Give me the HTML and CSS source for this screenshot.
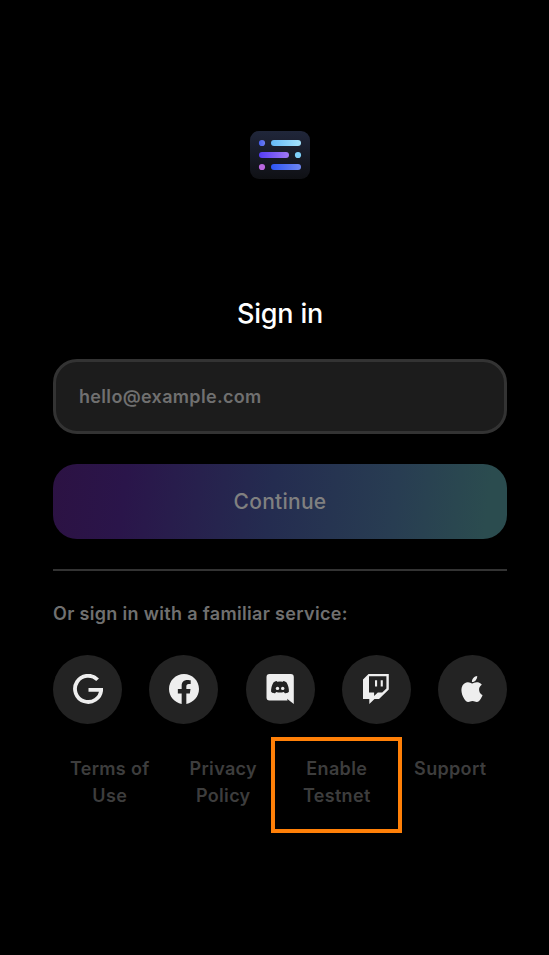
FILE: index.html
```html
<!DOCTYPE html>
<html lang="en">
<head>
<meta charset="utf-8">
<title>Sign in</title>
<link rel="stylesheet" href="styles.css">
</head>
<body>
<main class="page">
  <svg class="logo" viewBox="0 0 60 48" aria-hidden="true">
    <defs>
      <linearGradient id="bg" x1="0" y1="0" x2="0" y2="1"><stop stop-color="#20263a"/><stop offset="1" stop-color="#0f1014"/></linearGradient>
      <linearGradient id="sky"><stop stop-color="#65b9f8"/><stop offset="1" stop-color="#a4e3fc"/></linearGradient>
      <linearGradient id="violet"><stop stop-color="#553df5"/><stop offset="1" stop-color="#a078f5"/></linearGradient>
      <linearGradient id="blue"><stop stop-color="#2d55f5"/><stop offset="1" stop-color="#6e86f0"/></linearGradient>
      <linearGradient id="indigo"><stop stop-color="#4560f0"/><stop offset="1" stop-color="#6d7cf0"/></linearGradient>
    </defs>
    <rect width="60" height="48" rx="9" fill="url(#bg)"/>
    <circle cx="12" cy="12" r="3.1" fill="url(#indigo)"/>
    <rect x="21" y="9" width="30" height="6" rx="3" fill="url(#sky)"/>
    <rect x="9" y="21" width="30" height="6" rx="3" fill="url(#violet)"/>
    <circle cx="48" cy="24" r="3.1" fill="#7ed0f9"/>
    <circle cx="12" cy="36" r="3.1" fill="#b967df"/>
    <rect x="21" y="33" width="30" height="6" rx="3" fill="url(#blue)"/>
  </svg>
  <h1 class="title">Sign in</h1>
  <form class="form">
    <input class="email" type="email" placeholder="hello@example.com" aria-label="Email">
    <button class="continue" type="button">Continue</button>
  </form>
  <hr class="divider">
  <p class="hint">Or sign in with a familiar service:</p>
  <div class="services">
    <button class="service" aria-label="Google">
      <svg viewBox="0 0 30 30"><path d="M24.600 5.800A13.100 13.100 0 1 0 28.200 15.800H15.500" fill="none" stroke="#eee" stroke-width="3.800"/></svg>
    </button>
    <button class="service" aria-label="Facebook">
      <svg viewBox="0 0 24 24"><path fill="#eee" d="M24 12.073c0-6.627-5.373-12-12-12s-12 5.373-12 12c0 5.990 4.388 10.954 10.125 11.854v-8.385H7.078v-3.470h3.047V9.430c0-3.007 1.792-4.669 4.533-4.669 1.312 0 2.686.235 2.686.235v2.953H15.830c-1.491 0-1.956.925-1.956 1.874v2.250h3.328l-.532 3.470h-2.796v8.385C19.612 23.027 24 18.062 24 12.073z"/></svg>
    </button>
    <button class="service" aria-label="Discord">
      <svg viewBox="0 0 30 30"><path fill="#eee" d="M4.500 0h21.300a3 3 0 0 1 3 3v27l-6.800-5.200.6 1.700H4.500a3 3 0 0 1-3-3V3a3 3 0 0 1 3-3z"/><path fill="#232323" d="M8.400 8.500c1.500-1.100 3.200-1.400 3.200-1.400l.5.700a17 17 0 0 1 5.800 0l.5-.7s1.700.3 3.200 1.400c1.600 2.900 2.500 6.200 2.300 9.200-1.400 1.500-4 1.600-4 1.600l-1.100-1.400a14 14 0 0 1-7.600 0l-1.100 1.400s-2.600-.1-4-1.600C5.900 14.700 6.800 11.400 8.400 8.500z"/><circle cx="12.500" cy="14.400" r="1.700" fill="#eee"/><circle cx="17.700" cy="14.400" r="1.700" fill="#eee"/></svg>
    </button>
    <button class="service" aria-label="Twitch">
      <svg viewBox="0 0 30 30"><path fill="#eee" d="M7.500 0h20.300v15.500L18 25h-4.500l-5.200 5v-5H2V5.500z"/><path fill="#232323" d="M8 2.200h17.400v12.200l-4.200 4.100h-4.400l-3.700 3.600v-3.600H8z"/><path fill="#eee" d="M14 6.200h2.100v6.300H14zM19.700 6.200h2.100v6.300h-2.100z"/></svg>
    </button>
    <button class="service" aria-label="Apple">
      <svg class="apple" viewBox="0 0 24 24"><path fill="#eee" d="M12.152 6.896c-.948 0-2.415-1.078-3.960-1.040-2.040.027-3.910 1.183-4.961 3.014-2.117 3.675-.546 9.103 1.519 12.090 1.013 1.454 2.208 3.090 3.792 3.039 1.520-.065 2.090-.987 3.935-.987 1.831 0 2.350.987 3.960.948 1.637-.026 2.676-1.480 3.676-2.948 1.156-1.688 1.636-3.325 1.662-3.415-.039-.013-3.182-1.221-3.220-4.857-.026-3.040 2.480-4.494 2.597-4.559-1.429-2.090-3.623-2.324-4.390-2.376-2-.156-3.675 1.090-4.610 1.090zM15.530 3.830c.843-1.012 1.400-2.427 1.245-3.830-1.207.052-2.662.805-3.532 1.818-.780.896-1.454 2.338-1.273 3.714 1.338.104 2.715-.688 3.559-1.701"/></svg>
    </button>
  </div>
  <nav class="links">
    <a class="link">Terms of Use</a>
    <a class="link">Privacy Policy</a>
    <a class="link highlighted">Enable Testnet</a>
    <a class="link">Support</a>
  </nav>
</main>
</body>
</html>
```
FILE: styles.css
```css
* { box-sizing: border-box; }
body {
  margin: 0;
  background: #000;
  font: 600 18px/27px Inter, "Liberation Sans", sans-serif;
  letter-spacing: 0.33px;
}
.page {
  width: 454px;
  margin-left: 53px;
  padding-top: 131px;
  display: flex;
  flex-direction: column;
}
.logo { width: 60px; height: 48px; align-self: center; }
.title {
  margin: 115px 0 25px;
  font: 500 27px/40px Inter, sans-serif;
  letter-spacing: -0.2px;
  text-align: center;
  color: #fff;
}
.form { display: flex; flex-direction: column; gap: 30px; }
.email {
  height: 75px;
  padding: 0 23px;
  border: 3px solid #333;
  border-radius: 24px;
  background: #1c1c1c;
  font: inherit;
  letter-spacing: inherit;
  color: #fff;
}
.email::placeholder { color: #707070; opacity: 1; }
.continue {
  height: 75px;
  border: 0;
  border-radius: 24px;
  background: linear-gradient(97deg, #2c1243 0%, #2a154a 16%, #242c50 48%, #283d52 75%, #2b4c4f 95%);
  font: 500 21px/30px Inter, sans-serif;
  letter-spacing: 0.25px;
  color: #808080;
}
.divider { width: 100%; height: 2px; margin: 30px 0 29px; border: 0; background: #333; }
.hint { margin: 0; color: #707070; }
.services { display: flex; justify-content: space-between; margin-top: 28px; }
.service {
  display: grid;
  place-items: center;
  width: 69px;
  height: 69px;
  padding: 0;
  border: 0;
  border-radius: 50%;
  background: #232323;
}
.service svg { width: 30px; height: 30px; margin-bottom: 1px; }
.service .apple { width: 26px; height: 26px; margin: 0 1px 2px 0; }
.links {
  display: grid;
  grid-template-columns: repeat(4, 1fr);
  margin-top: 13px;
  height: 96px;
}
.link { padding: 18px 16px 0; text-align: center; color: #3d3d3d; position: relative; }
.highlighted::after {
  content: "";
  position: absolute;
  inset: 0 -8.500px 0 -9px;
  border: 4px solid #ff8008;
}
```
